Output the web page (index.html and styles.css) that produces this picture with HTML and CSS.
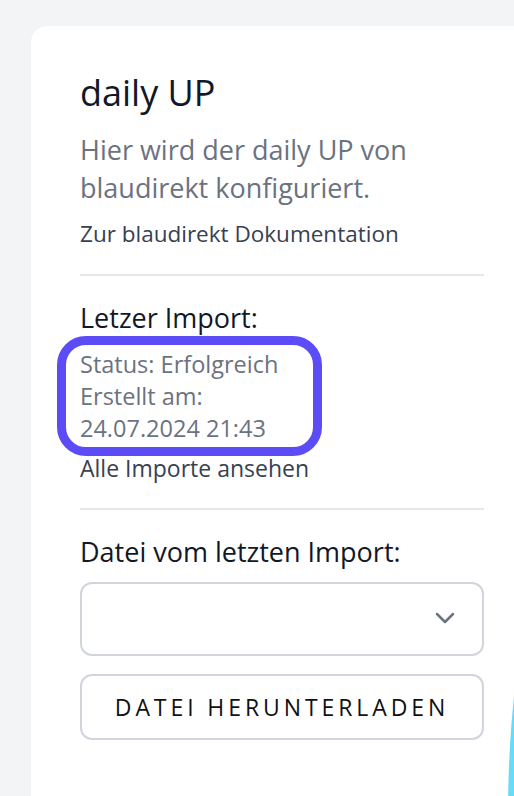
FILE: index.html
```html
<!DOCTYPE html>
<html lang="de">
<head>
  <meta charset="UTF-8" />
  <title>daily UP</title>
  <link rel="stylesheet" href="styles.css">
</head>
<body>
  <div class="page">
    <div class="card">
      <h1 class="title">daily UP</h1>
      <p class="desc">Hier wird der daily UP von blaudirekt konfiguriert.</p>
      <a class="link" href="#">Zur blaudirekt Dokumentation</a>

      <hr class="divider" />

      <!-- Letzter Import -->
      <h2 class="section-title">Letzer Import:</h2>
      <div class="status-box">
        <div>Status: Erfolgreich</div>
        <div>Erstellt am:</div>
        <div>24.07.2024 21:43</div>
      </div>
      <a class="link link-after-box" href="#">Alle Importe ansehen</a>

      <hr class="divider" />

      <h2 class="section-title">Datei vom letzten Import:</h2>
      <div class="select">
        <svg class="chevron" width="20" height="12" viewBox="0 0 20 12" fill="none">
          <path d="M2 2l8 8 8-8" stroke="#6b7280" stroke-width="2.5" stroke-linecap="round" stroke-linejoin="round"/>
        </svg>
      </div>
      <button class="download-btn">Datei herunterladen</button>
    </div>
  </div>
  <div class="fab-wrap"><div class="fab"></div></div>
</body>
</html>
```

FILE: styles.css
```css
html, body {
  margin: 0;
  height: 100%;
  overflow: hidden;
}
body {
  background: #f3f4f6;
  font-family: "Open Sans", sans-serif;
  color: #111827;
}
.page {
  box-sizing: border-box;
  height: 100%;
  padding: 26px 0 0 31px;
}
.card {
  box-sizing: border-box;
  height: 100%;
  padding: 45px 30px 0 49px;
  background: #fff;
  border-radius: 16px 0 0 0;
  box-shadow: 0 1px 2px rgba(0,0,0,0.04);
}
.title {
  margin: 0;
  font-size: 36px;
  font-weight: 400;
  line-height: 44px;
}
.desc {
  margin: 16px 0 12px;
  font-size: 27px;
  line-height: 38px;
  color: #6b7280;
}
.link {
  display: block;
  font-size: 22.5px;
  line-height: 30px;
  color: #374151;
  text-decoration: none;
}
.link-after-box {
  margin-top: 6px;
  font-size: 23px;
}
.divider {
  margin: 25px 0 24px;
  border: none;
  border-top: 2px solid #e5e7eb;
}
.section-title {
  margin: 0;
  font-size: 27px;
  font-weight: 400;
  line-height: 36px;
}
.status-box {
  width: 219px;
  margin: 9px 0 0 -14px;
  padding: 3px 14px;
  border-radius: 20px;
  outline: 9px solid #5b4cf5;
  font-size: 23.5px;
  line-height: 32px;
  color: #6b7280;
}
.select {
  position: relative;
  height: 70px;
  margin-top: 12px;
  border: 2px solid #d1d5db;
  border-radius: 12px;
}
.chevron {
  position: absolute;
  right: 27px;
  top: 28px;
}
.download-btn {
  display: block;
  width: 100%;
  height: 66px;
  margin-top: 18px;
  border: 2px solid #d1d5db;
  border-radius: 12px;
  background: #fff;
  font-family: "Open Sans", sans-serif;
  font-size: 23px;
  letter-spacing: 0.17em;
  text-transform: uppercase;
  color: #111;
}
/* floating button peeking in from the right edge */
.fab-wrap {
  position: absolute;
  left: 506px;
  top: 680px;
  width: 8px;
  height: 116px;
  overflow: hidden;
}
.fab {
  margin: -63px 0 0 2px;
  width: 200px;
  height: 400px;
  background: #67dcf8;
  border-top-left-radius: 30px 200px;
}
```
